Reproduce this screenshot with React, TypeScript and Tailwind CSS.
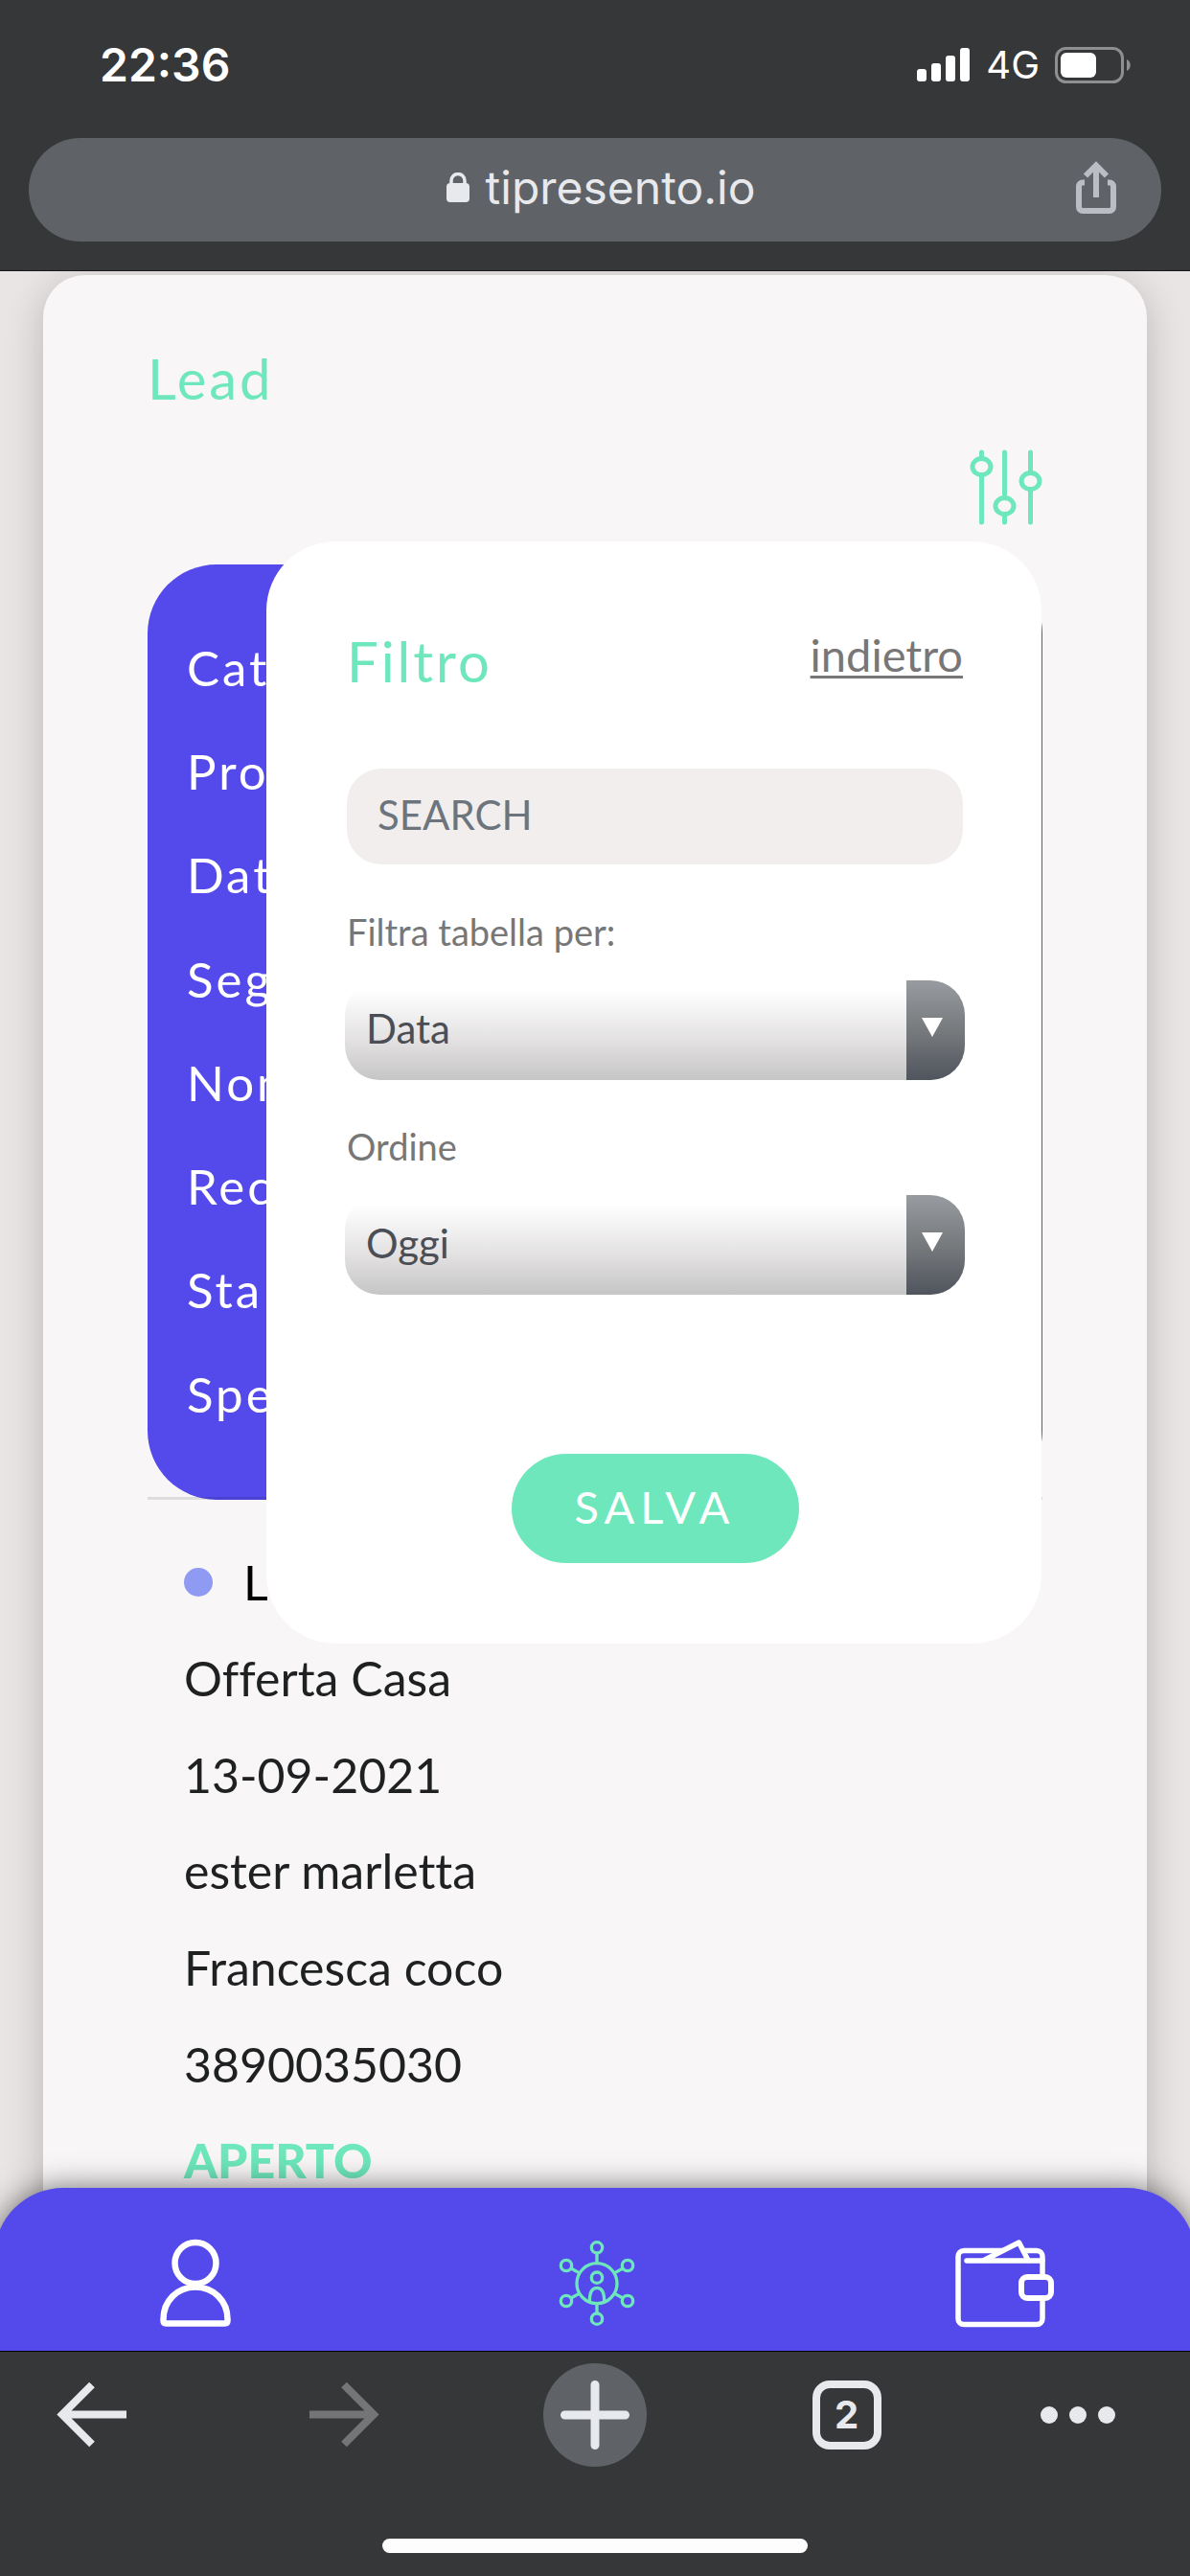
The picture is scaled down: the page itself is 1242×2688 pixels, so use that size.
import React from "react";

const leadFields = ["Cat", "Pro", "Dat", "Seg", "Nom", "Rec", "Sta", "Spe"];

const leadValues = [
  "Offerta Casa",
  "13-09-2021",
  "ester marletta",
  "Francesca coco",
  "3890035030",
];

function StatusBar() {
  return (
    <div className="flex h-[136px] items-center justify-between pr-[61px] pl-[104px] text-white">
      <span className="text-5xl font-semibold">22:36</span>
      <div className="flex items-center">
        <svg width="56" height="36" viewBox="0 0 56 36" fill="currentColor" aria-hidden="true">
          <rect x="0" y="22" width="10" height="13" rx="3" />
          <rect x="15" y="16" width="10" height="19" rx="3" />
          <rect x="30" y="8" width="10" height="27" rx="3" />
          <rect x="45" y="0" width="10" height="35" rx="3" />
        </svg>
        <span className="ml-4 text-[40px]">4G</span>
        <svg className="ml-4" width="80" height="38" viewBox="0 0 80 38" aria-hidden="true">
          <rect x="1.5" y="1.5" width="69" height="35" rx="10" fill="none" stroke="#8e8f90" strokeWidth="3" />
          <rect x="6" y="6" width="37" height="26" rx="6" fill="#fff" />
          <path d="M75 13c5 2 5 10 0 12z" fill="#8e8f90" />
        </svg>
      </div>
    </div>
  );
}

function AddressBar() {
  return (
    <div className="mx-[30px] mt-2 flex h-[108px] items-center rounded-full bg-[#5f6267] pr-[46px] pl-[57px] text-[#e8e9ed]">
      <div className="flex-1" />
      <div className="flex items-center gap-4 pb-1">
        <svg width="26" height="32" viewBox="0 0 26 32" aria-hidden="true">
          <rect x="1" y="11" width="24" height="20" rx="4" fill="currentColor" />
          <path d="M6 13V8.500a7 7 0 0 1 14 0V13" fill="none" stroke="currentColor" strokeWidth="3.500" />
        </svg>
        <span className="text-5xl">tipresento.io</span>
      </div>
      <div className="flex flex-1 justify-end">
        <button type="button" aria-label="Condividi" className="pb-1 text-[#babdc3]">
          <svg width="44" height="56" viewBox="0 0 44 56" fill="none" stroke="currentColor" strokeWidth="6">
            <path d="M10 22.500H8a4 4 0 0 0-4 4V48a4 4 0 0 0 4 4h28a4 4 0 0 0 4-4V26.500a4 4 0 0 0-4-4h-2" />
            <path d="M22 38V8" />
            <path d="M11 15.500 22 4.500l11 11" />
          </svg>
        </button>
      </div>
    </div>
  );
}

function SlidersIcon() {
  return (
    <svg width="76" height="80" viewBox="0 0 76 80" fill="#f8f6f7" stroke="#6de7bb" strokeWidth="5" strokeLinecap="round" aria-hidden="true">
      <path d="M12.500 4v73M36.500 4v73M63.500 4v73" />
      <ellipse cx="12.500" cy="19" rx="9.500" ry="8.500" />
      <ellipse cx="36.500" cy="60" rx="9.500" ry="8.500" />
      <ellipse cx="63.500" cy="34" rx="9.500" ry="8.500" />
    </svg>
  );
}

function FilterSelect({ id, label, options }: { id: string; label: string; options: string[] }) {
  return (
    <div>
      <label htmlFor={id} className="block text-[38px] leading-[48px] text-[#777777]">
        {label}
      </label>
      <div className="-mx-0.5 mt-[27px] flex h-[104px] overflow-hidden rounded-[36px] bg-linear-to-b from-white from-10% via-[#e3e1e2] via-60% to-[#c6c5c6]">
        <select id={id} className="min-w-0 flex-1 appearance-none bg-transparent pb-1 pl-[22px] text-[42px] text-[#4b4f55] outline-none">
          {options.map((option) => (
            <option key={option}>{option}</option>
          ))}
        </select>
        <div className="pointer-events-none flex w-[61px] justify-center bg-linear-to-b from-[#989b9f] via-[#74777a] via-55% to-[#50545d] pt-[39px] pr-2">
          <svg width="22" height="20" viewBox="0 0 22 20" fill="#fff" aria-hidden="true">
            <path d="M0 0h22L11 20z" />
          </svg>
        </div>
      </div>
    </div>
  );
}

function FilterPanel() {
  return (
    <form
      className="absolute -top-6 right-px left-[124px] flex flex-col rounded-[72px] bg-white pt-[93px] pr-[82px] pb-[84px] pl-[84px]"
      onSubmit={(event) => event.preventDefault()}
    >
      <div className="flex items-start justify-between">
        <h2 className="text-[58px] leading-[64px] tracking-[3px] text-[#6de7bb]">Filtro</h2>
        <a href="#lead" className="text-[47px] leading-[50px] text-[#777777] underline decoration-[3px] underline-offset-4">
          indietro
        </a>
      </div>
      <input
        type="text"
        aria-label="Search"
        placeholder="SEARCH"
        className="mt-20 h-[100px] w-full rounded-[36px] bg-[#f2eeed] px-8 pb-1 text-[42px] text-[#6c757d] outline-none placeholder:text-[#6c757d]"
      />
      <div className="mt-[46px] flex flex-col gap-[45px]">
        <FilterSelect id="filter-by" label="Filtra tabella per:" options={["Data", "Categoria", "Stato"]} />
        <FilterSelect id="filter-order" label="Ordine" options={["Oggi", "Settimana", "Mese"]} />
      </div>
      <button
        type="submit"
        className="mt-[166px] h-[114px] w-[300px] self-center rounded-full bg-[#6de7bb] pb-1 text-[47px] tracking-[6px] text-white"
      >
        SALVA
      </button>
    </form>
  );
}

function LeadCard() {
  return (
    <section
      id="lead"
      className="mx-[45px] mt-1 min-h-full rounded-[44px] bg-[#f8f6f7] px-[109px] pt-[76px] shadow-[0_8px_40px_rgba(0,0,0,0.2)]"
    >
      <h1 className="text-[58px] leading-[64px] tracking-[3px] text-[#6de7bb]">Lead</h1>
      <div className="mt-[41px] flex justify-end">
        <button type="button" aria-label="Filtro">
          <SlidersIcon />
        </button>
      </div>
      <div className="relative mt-[41px]">
        <ul className="-mb-[3px] grid h-[976px] grid-rows-8 items-center rounded-[72px] bg-[#544aeb] pt-[54px] pb-[56px] pl-[41px] text-[51px] tracking-[3px] text-white">
          {leadFields.map((field) => (
            <li key={field}>{field}</li>
          ))}
        </ul>
        <hr className="relative h-[3px] border-0 bg-black/10" />
        <ul className="mt-9 grid h-[704px] grid-rows-7 items-center pl-[38px] text-[50px] text-[#1f2021] [font-variant-ligatures:none]">
          <li className="flex items-center gap-8 text-black">
            <span className="size-[30px] rounded-full bg-[#8f9af2]" />
            L
          </li>
          {leadValues.map((value) => (
            <li key={value}>{value}</li>
          ))}
          <li className="font-black text-[#6de7bb]">APERTO</li>
        </ul>
        <FilterPanel />
      </div>
    </section>
  );
}

function SiteNav() {
  return (
    <nav className="relative -mx-1.5 -mt-[72px] flex shrink-0 justify-between rounded-t-[72px] bg-[#544aeb] pt-[47px] pr-[148px] pb-[19px] pl-[158px] shadow-[0_0_32px_rgba(0,0,0,0.55)]">
      <a href="#profile" aria-label="Profilo">
        <svg width="104" height="104" viewBox="0 0 104 104" fill="none" stroke="#fff" strokeWidth="6.500" strokeLinejoin="round">
          <circle cx="52" cy="31.500" r="21.500" />
          <path d="M18.500 90C18.500 71 33 56.500 52 56.500S85.500 71 85.500 90v1.500q0 3-3 3h-61q-3 0-3-3z" />
        </svg>
      </a>
      <a href="#network" aria-label="Lead">
        <svg width="104" height="104" viewBox="41 30 312 312" fill="none" stroke="#6de7bb" strokeWidth="10">
          <circle cx="188" cy="188" r="63" />
          <circle cx="188" cy="76" r="17" />
          <circle cx="284" cy="132" r="17" />
          <circle cx="284" cy="243" r="17" />
          <circle cx="188" cy="299" r="17" />
          <circle cx="92" cy="243" r="17" />
          <circle cx="92" cy="132" r="17" />
          <path d="M188 94v31M188 251v31M244 155l25-14M244 220l25 14M132 155l-25-14M132 220l-25 14" />
          <circle cx="188" cy="170" r="17" />
          <path d="M165 243c0-27 8-41 23-41s23 14 23 41" />
        </svg>
      </a>
      <a href="#wallet" aria-label="Portafoglio">
        <svg width="104" height="104" viewBox="0 0 104 104" fill="#544aeb" stroke="#fff" strokeWidth="5.500" strokeLinejoin="round" strokeLinecap="round">
          <rect x="4" y="18.500" width="88" height="77" rx="6" />
          <path d="M31 28.500 67.500 10 77 28.500" />
          <path d="M13 29H92" />
          <rect x="70" y="46" width="31" height="22" rx="6" strokeWidth="6" />
        </svg>
      </a>
    </nav>
  );
}

function BrowserToolbar() {
  return (
    <footer className="relative shrink-0 border-t border-black bg-[#363738] pt-3 pb-6 text-[#e8e9ed]">
      <div className="flex justify-between px-[42px]">
        <button type="button" aria-label="Indietro" className="size-[108px]">
          <svg width="108" height="108" viewBox="0 0 108 108" fill="none" stroke="currentColor" strokeWidth="8">
            <path d="M90 53.500H24M54 22.500l-31 31 31 31" />
          </svg>
        </button>
        <button type="button" aria-label="Avanti" className="size-[108px] text-[#747577]">
          <svg width="108" height="108" viewBox="0 0 108 108" fill="none" stroke="currentColor" strokeWidth="8">
            <path d="M18 53.500h66M54 22.500l31 31-31 31" />
          </svg>
        </button>
        <button type="button" aria-label="Nuova scheda" className="size-[108px] rounded-full bg-[#5f6267]">
          <svg width="108" height="108" viewBox="0 0 108 108" fill="none" stroke="currentColor" strokeWidth="9" strokeLinecap="round">
            <path d="M54 22.500v63M22.500 54h63" />
          </svg>
        </button>
        <button type="button" aria-label="Schede aperte" className="flex size-[108px] items-center justify-center">
          <span className="flex size-[72px] items-center justify-center rounded-[18px] border-8 border-[#e8e9ed] text-[40px] leading-none font-bold">
            2
          </span>
        </button>
        <button type="button" aria-label="Menu" className="size-[108px]">
          <svg className="overflow-visible" width="108" height="108" viewBox="0 0 108 108" fill="currentColor">
            <circle cx="3" cy="54" r="9" />
            <circle cx="33" cy="54" r="9" />
            <circle cx="63" cy="54" r="9" />
          </svg>
        </button>
      </div>
      <div className="mx-auto mt-[75px] h-[15px] w-[444px] rounded-full bg-[#fdfdfd]" />
    </footer>
  );
}

export default function App() {
  return (
    <div className="flex h-screen flex-col overflow-hidden bg-[#e9e5e4] font-['Inter',sans-serif]">
      <header className="relative z-10 shrink-0 border-b border-[#1a1a1b] bg-[#363738] pb-[30px]">
        <StatusBar />
        <AddressBar />
      </header>
      <main className="min-h-0 flex-1 overflow-hidden font-['Lato',sans-serif]">
        <LeadCard />
      </main>
      <SiteNav />
      <BrowserToolbar />
    </div>
  );
}
